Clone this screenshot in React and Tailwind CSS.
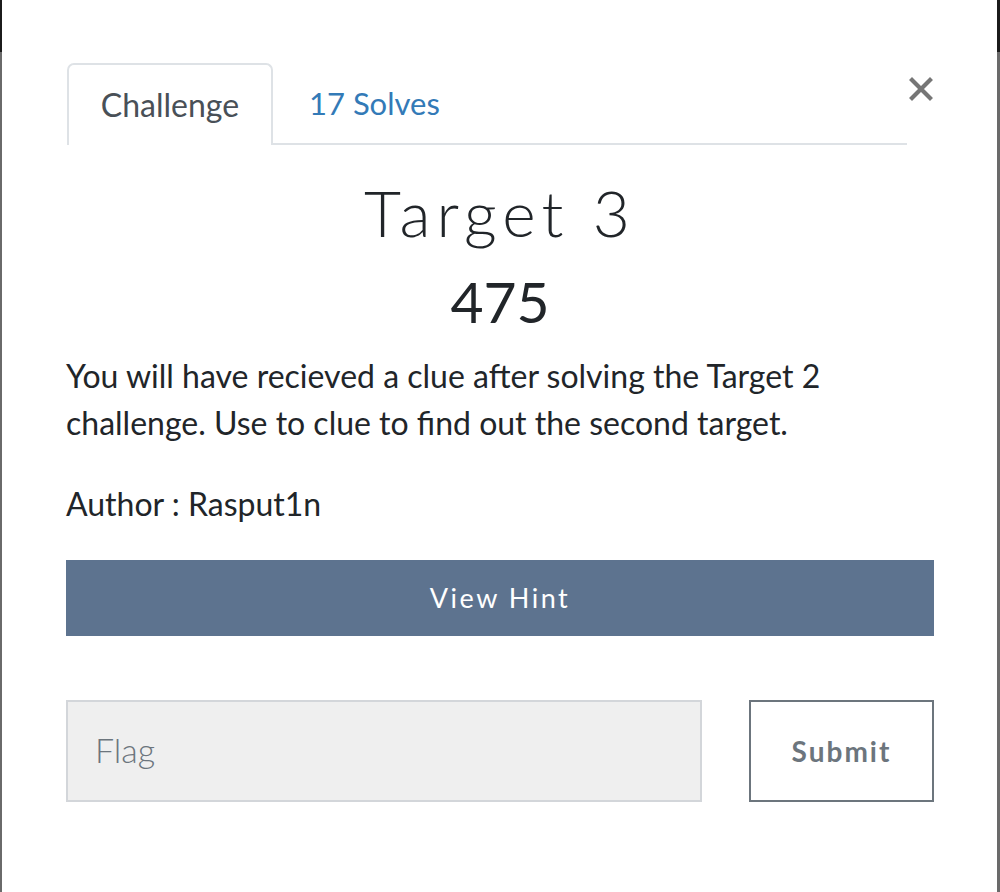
import React from "react";

export default function App() {
  const body = { fontFamily: "Lato, 'Noto Sans', sans-serif" };

  return (
    <div
      className="w-[1000px] h-[892px] flex bg-[linear-gradient(#1b1b1b_0_52px,#6a6a6a_52px)]"
      style={body}
    >
      <div className="relative ml-[2px] mr-[3px] flex-1 bg-white pl-[64px] pr-[63px] pt-[63px]">
        {/* close */}
        <button className="absolute left-[906px] top-[76px] w-[26px] h-[26px] flex items-center justify-center">
          <svg width="26" height="26" viewBox="0 0 26 26">
            <path d="M4 4 L22 22 M22 4 L4 22" stroke="#767676" strokeWidth="4.2" strokeLinecap="square" />
          </svg>
        </button>

        {/* tabs */}
        <div className="flex ml-[1px] mr-[27px] border-b-2 border-[#dee2e6] h-[82px]">
          <div className="w-[206px] h-[82px] -mb-[2px] flex items-center justify-center rounded-t-[7px] border-2 border-b-0 border-[#dee2e6] bg-white text-[32px] text-[#495057]">
            <span className="-mt-[1px]">Challenge</span>
          </div>
          <div className="pl-[36px] flex items-center text-[31px] text-[#337ab7] mt-[1px]">
            17 Solves
          </div>
        </div>

        {/* title */}
        <h3 className="mt-[30px] text-center text-[64px] leading-[1.2] font-light tracking-[6px] text-[#212529]">
          Target 3
        </h3>
        <h4 className="mt-[15px] text-center text-[57px] leading-[1.2] font-normal text-[#212529]">
          475
        </h4>

        {/* description */}
        <p className="mt-[17px] text-[32px] leading-[47px] text-[#212529]">
          You will have recieved a clue after solving the Target 2 challenge. Use to clue to find out
          the second target.
        </p>
        <p className="mt-[34px] text-[32px] leading-[47px] text-[#212529]">Author : Rasput1n</p>

        {/* hint */}
        <button className="mt-[33px] w-full h-[76px] bg-[#5d738f] text-white text-[27px] tracking-[2.5px] flex items-center justify-center">
          View Hint
        </button>

        {/* flag */}
        <div className="mt-[64px] flex gap-[47px]">
          <input
            placeholder="Flag"
            className="w-[636px] h-[102px] bg-[#efefef] border-2 border-[#d3d6da] px-[27px] pb-[3px] text-[34px] font-light text-[#6c757d] placeholder:text-[#6c757d] outline-none"
            style={body}
          />
          <button className="w-[185px] h-[102px] border-2 border-[#6c757d] bg-white text-[28px] font-bold tracking-[2px] text-[#6c757d] flex items-center justify-center">
            Submit
          </button>
        </div>
      </div>
    </div>
  );
}
